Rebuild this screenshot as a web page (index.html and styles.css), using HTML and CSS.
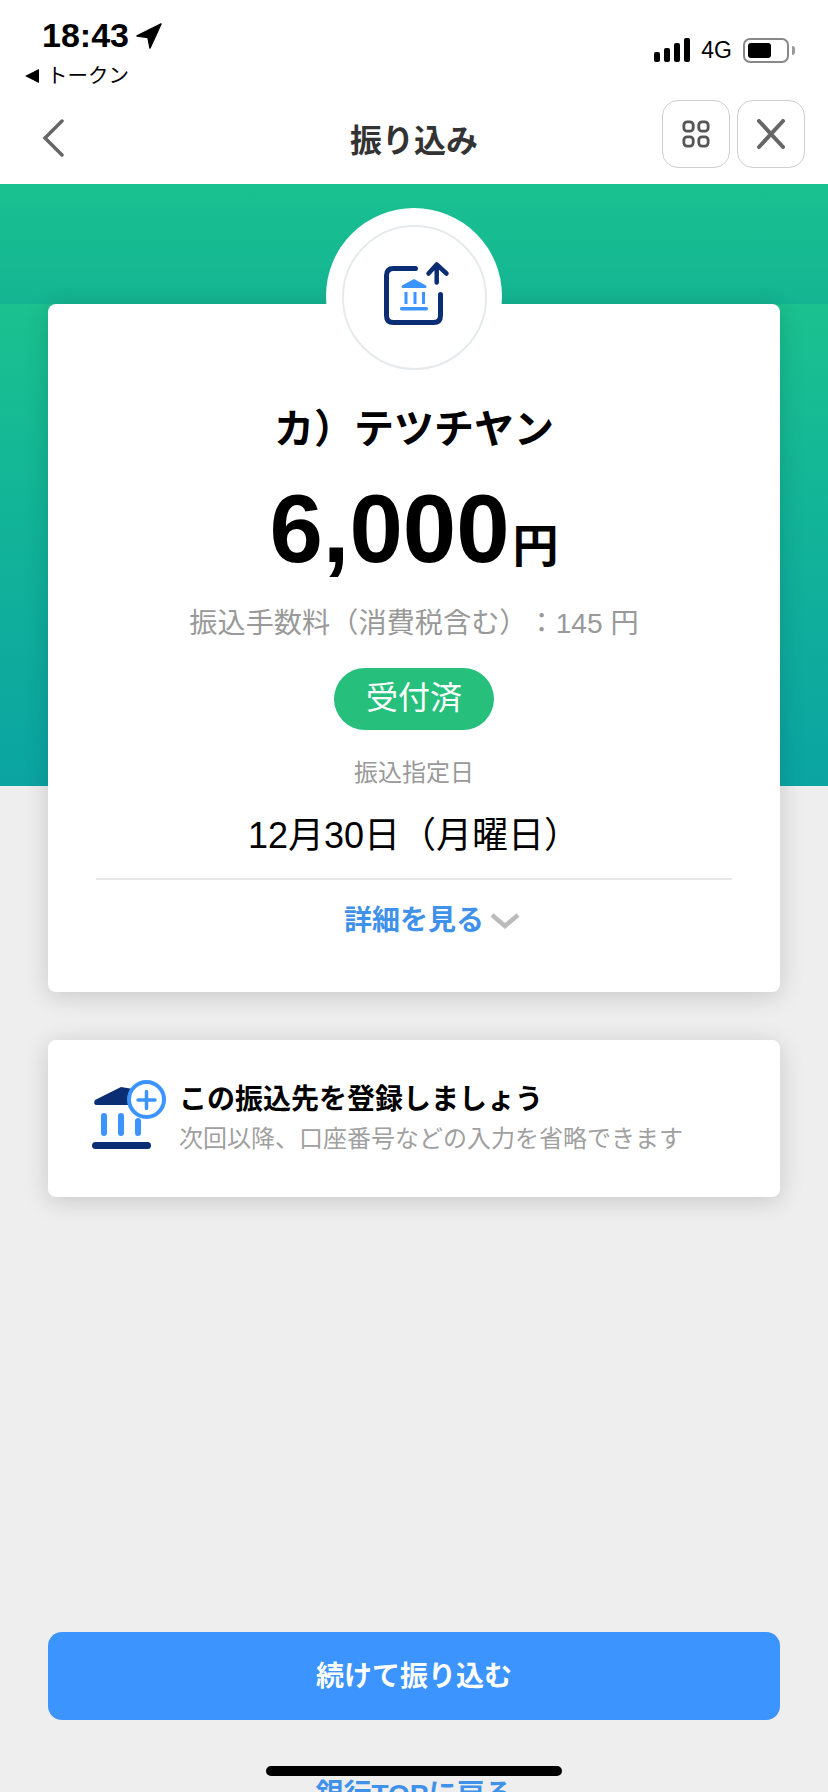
FILE: index.html
```html
<!DOCTYPE HTML>
<html lang="ja">
<head>
  <meta charset="UTF-8">
  <meta name="viewport" content="width=device-width, initial-scale=1.0">
  <title>振り込み</title>
  <link rel="stylesheet" href="styles.css">
</head>
<body>
  <div class="screen">
    <!-- Status bar -->
    <div class="status-bar">
      <div class="status-left">
        <div class="clock">18:43
          <svg class="location" width="26" height="26" viewBox="0 0 26 26"><path d="M25 1 L1 13 L12 14.500 L14 25 Z" fill="#000" stroke="#000" stroke-width="1.500" stroke-linejoin="round"/></svg>
        </div>
        <div class="back-app"><span class="back-arrow"></span>トークン</div>
      </div>
      <div class="status-right">
        <div class="signal"><i class="s1"></i><i class="s2"></i><i class="s3"></i><i class="s4"></i></div>
        <span class="network">4G</span>
        <div class="battery"><div class="battery-level"></div></div>
        <div class="battery-cap"></div>
      </div>
    </div>

    <!-- Nav -->
    <div class="nav">
      <svg class="nav-back" width="24" height="38" viewBox="0 0 24 38"><path d="M21 2 L4 19 L21 36" fill="none" stroke="#666" stroke-width="3.500" stroke-linecap="round"/></svg>
      <h1 class="nav-title">振り込み</h1>
      <div class="nav-buttons">
        <div class="nav-btn">
          <svg width="28" height="28" viewBox="0 0 30 30" fill="none" stroke="#555" stroke-width="3"><rect x="2" y="2" width="10" height="10" rx="3.500"/><rect x="18" y="2" width="10" height="10" rx="3.500"/><rect x="2" y="18" width="10" height="10" rx="3.500"/><rect x="18" y="18" width="10" height="10" rx="3.500"/></svg>
        </div>
        <div class="nav-btn">
          <svg width="30" height="30" viewBox="0 0 30 30" fill="none" stroke="#666" stroke-width="4" stroke-linecap="round"><path d="M3 2 L27 28 M27 2 L3 28"/></svg>
        </div>
      </div>
    </div>

    <div class="content">
      <div class="hero-band"></div>

      <!-- Transfer result -->
      <div class="card result-card">
        <div class="badge-icon">
          <div class="badge-inner">
            <svg width="66" height="66" viewBox="0 0 66 66" fill="none">
              <path d="M31.500 7.500 H9.500 Q2.500 7.500 2.500 14.500 V54.500 Q2.500 61.500 9.500 61.500 H49.500 Q56.500 61.500 56.500 54.500 V33.500" stroke="#0b2d73" stroke-width="5" stroke-linecap="round"/>
              <path d="M52.700 21.500 V4 M44.500 12.500 L52.700 3.500 L62.500 12.500" stroke="#0b2d73" stroke-width="4.500" stroke-linecap="round" stroke-linejoin="round"/>
              <path d="M30 18 L42 24.500 Q43.500 27 41 27 H19 Q16.500 27 18 24.500 Z" fill="#3b94ff"/>
              <path d="M22 31 V43 M31 31 V43 M39.500 31 V43" stroke="#3b94ff" stroke-width="3"/>
              <path d="M17.700 47.700 H42.300" stroke="#3b94ff" stroke-width="3.500" stroke-linecap="round"/>
            </svg>
          </div>
        </div>
        <div class="payee">カ）テツチヤン</div>
        <div class="amount">6,000<span class="yen">円</span></div>
        <div class="fee">振込手数料（消費税含む）：145 円</div>
        <div class="status-pill">受付済</div>
        <div class="date-label">振込指定日</div>
        <div class="date-value">12月30日（月曜日）</div>
        <div class="detail-link">詳細を見る
          <svg width="30" height="16" viewBox="0 0 30 16"><path d="M2 2 L15 13 L28 2" fill="none" stroke="#bbb" stroke-width="4.500"/></svg>
        </div>
      </div>

      <!-- Register payee -->
      <div class="card register-card">
        <svg class="register-icon" width="78" height="72" viewBox="0 0 78 72" fill="none">
          <path d="M30 10 L4 23 Q1.500 28 6 28 H42 V12 Z" fill="#0b2d73"/>
          <path d="M13 39 V56 M30 39 V56 M47 44 V56" stroke="#3b94ff" stroke-width="6" stroke-linecap="round"/>
          <path d="M4.500 68.500 H56.500" stroke="#0b2d73" stroke-width="7" stroke-linecap="round"/>
          <circle cx="55.500" cy="22.500" r="17.500" fill="#fff" stroke="#3b94ff" stroke-width="4"/>
          <path d="M55.500 14.500 V31.500 M47 23 H64" stroke="#3b94ff" stroke-width="3.500" stroke-linecap="round"/>
        </svg>
        <div class="register-text">
          <div class="register-title">この振込先を登録しましょう</div>
          <div class="register-sub">次回以降、口座番号などの入力を省略できます</div>
        </div>
      </div>

      <div class="actions">
        <button class="primary-btn">続けて振り込む</button>
        <a class="top-link">銀行TOPに戻る</a>
      </div>
    </div>

    <div class="home-bar"></div>
  </div>
</body>
</html>
```

FILE: styles.css
```css
* {
  box-sizing: border-box;
}
html, body {
  margin: 0;
  padding: 0;
}
body {
  font-family: "Liberation Sans", "Noto Sans CJK JP", sans-serif;
  background-color: #fff;
  color: #000;
  text-spacing-trim: space-all;
}
.screen {
  position: relative;
  width: 828px;
  height: 1792px;
  overflow: hidden;
  display: flex;
  flex-direction: column;
  background-color: #eeeeef;
}

/* Status bar */
.status-bar {
  flex: none;
  height: 92px;
  padding: 17px 33px 0 25px;
  background-color: #fff;
  display: flex;
  justify-content: space-between;
}
.clock {
  margin-left: 17px;
  height: 37px;
  display: flex;
  align-items: center;
  gap: 7px;
  font-size: 34px;
  font-weight: bold;
  line-height: 37px;
}
.location {
  margin-top: 1px;
}
.back-app {
  margin-top: 8px;
  display: flex;
  align-items: center;
  font-size: 20.500px;
  line-height: 28px;
}
.back-arrow {
  width: 0;
  height: 0;
  margin-right: 8px;
  border-top: 7px solid transparent;
  border-bottom: 7px solid transparent;
  border-right: 14px solid #000;
}
.status-right {
  margin-top: 21px;
  height: 24px;
  display: flex;
  align-items: center;
}
.signal {
  display: flex;
  align-items: flex-end;
  gap: 4px;
  height: 24px;
}
.signal i {
  width: 6px;
  border-radius: 2px;
  background-color: #000;
}
.signal .s1 { height: 10px; }
.signal .s2 { height: 14px; }
.signal .s3 { height: 19px; }
.signal .s4 { height: 24px; }
.network {
  margin-left: 11px;
  font-size: 23px;
}
.battery {
  margin-left: 11px;
  width: 46px;
  height: 25px;
  padding: 3px;
  border: 2px solid #888;
  border-radius: 7px;
}
.battery-level {
  width: 23px;
  height: 100%;
  border-radius: 3px;
  background-color: #000;
}
.battery-cap {
  margin-left: 3px;
  width: 3px;
  height: 9px;
  border-radius: 0 3px 3px 0;
  background-color: #999;
}

/* Nav */
.nav {
  flex: none;
  position: relative;
  height: 92px;
  background-color: #fff;
  display: flex;
  align-items: center;
  justify-content: center;
}
.nav-back {
  position: absolute;
  left: 41px;
  top: 27px;
}
.nav-title {
  margin: 0;
  font-size: 32px;
  font-weight: bold;
  color: #333;
}
.nav-buttons {
  position: absolute;
  right: 23px;
  top: 8px;
  display: flex;
  gap: 7px;
}
.nav-btn {
  width: 68px;
  height: 68px;
  border: 1px solid #cfcfcf;
  border-radius: 16px;
  display: flex;
  align-items: center;
  justify-content: center;
}

/* Main */
.content {
  position: relative;
  flex: 1;
  min-height: 0;
  padding: 120px 48px 0;
  display: flex;
  flex-direction: column;
}
.hero-band {
  position: absolute;
  left: 0;
  top: 0;
  width: 100%;
  height: 602px;
  background: linear-gradient(180deg, #19c190 0, #14b492 120px, #1bc18f 120px, #12b498 55%, #0ba4a2 100%);
}
.card {
  position: relative;
  background-color: #fff;
  border-radius: 8px;
  box-shadow: 0 4px 24px rgba(0, 0, 0, 0.16);
}
.result-card {
  flex: none;
  height: 688px;
  padding: 0 48px;
  display: flex;
  flex-direction: column;
  align-items: center;
}
.badge-icon {
  position: absolute;
  left: 278px;
  top: -96px;
  width: 176px;
  height: 176px;
  padding: 17px 15px 14px 16px;
  border-radius: 50%;
  background-color: #fff;
}
.badge-inner {
  width: 100%;
  height: 100%;
  border: 2px solid #e6eaec;
  border-radius: 50%;
  display: flex;
  align-items: center;
  justify-content: center;
  padding-left: 5px;
  padding-bottom: 7px;
}
.payee {
  margin-top: 100px;
  font-size: 40px;
  font-weight: bold;
  line-height: 50px;
}
.amount {
  margin-top: 20px;
  font-size: 96px;
  font-weight: bold;
  line-height: 110px;
  display: flex;
  align-items: baseline;
}
.yen {
  font-size: 46px;
  margin-left: 3px;
}
.fee {
  margin-top: 2px;
  font-size: 28.200px;
  line-height: 40px;
  color: #999;
}
.status-pill {
  margin-top: 25px;
  width: 160px;
  height: 62px;
  border-radius: 31px;
  background-color: #26bf7c;
  color: #fff;
  font-size: 32px;
  line-height: 60px;
  text-align: center;
}
.date-label {
  margin-top: 27px;
  font-size: 24px;
  line-height: 32px;
  color: #999;
}
.date-value {
  margin-top: 26px;
  width: 100%;
  height: 65px;
  border-bottom: 2px solid #e8e8e8;
  font-size: 36px;
  line-height: 42px;
  text-align: center;
}
.detail-link {
  margin-top: 21px;
  margin-left: 36px;
  display: flex;
  align-items: center;
  gap: 6px;
  font-size: 28px;
  font-weight: bold;
  line-height: 40px;
  color: #3f91ea;
}
.register-card {
  flex: none;
  margin-top: 48px;
  height: 157px;
  padding: 37px 0 0 43px;
  display: flex;
  align-items: flex-start;
  gap: 10px;
}
.register-text {
  margin-top: 3px;
}
.register-title {
  font-size: 28px;
  font-weight: bold;
  line-height: 40px;
}
.register-sub {
  margin-top: 3px;
  font-size: 24px;
  line-height: 32px;
  color: #a0a0a0;
}
.actions {
  flex: none;
  margin-top: 435px;
  display: flex;
  flex-direction: column;
  align-items: center;
}
.primary-btn {
  width: 100%;
  height: 88px;
  padding: 0 0 4px;
  border: none;
  border-radius: 14px;
  background-color: #3b94ff;
  color: #fff;
  font-family: inherit;
  font-size: 28px;
  font-weight: bold;
}
.top-link {
  margin-top: 55px;
  font-size: 28px;
  font-weight: bold;
  line-height: 40px;
  color: #3f91ea;
}
.home-bar {
  position: absolute;
  left: 266px;
  top: 1766px;
  width: 296px;
  height: 10px;
  border-radius: 5px;
  background-color: #000;
}
```
